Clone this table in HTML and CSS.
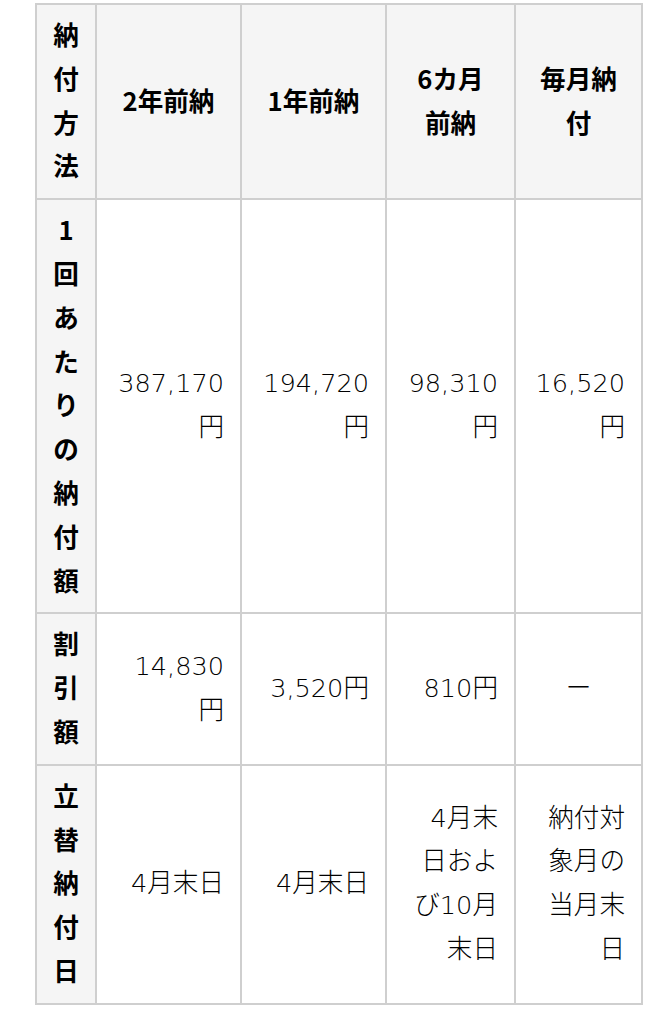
FILE: index.html
```html
<!DOCTYPE html>
<html lang="ja">
<head>
<meta charset="utf-8">
<title>納付方法</title>
<link rel="stylesheet" href="styles.css">
</head>
<body>
<table class="pay-table">
  <thead>
    <tr>
      <th class="c1">納付方法</th>
      <th class="c2">2年前納</th>
      <th class="c3">1年前納</th>
      <th class="c4">6カ月<br>前納</th>
      <th class="c5">毎月納<br>付</th>
    </tr>
  </thead>
  <tbody>
    <tr>
      <th class="row-head">1回あたりの納付額</th>
      <td>387,170<br>円</td>
      <td>194,720<br>円</td>
      <td>98,310<br>円</td>
      <td>16,520<br>円</td>
    </tr>
    <tr>
      <th class="row-head">割引額</th>
      <td>14,830<br>円</td>
      <td>3,520円</td>
      <td>810円</td>
      <td class="center">ー</td>
    </tr>
    <tr>
      <th class="row-head">立替納付日</th>
      <td>4月末日</td>
      <td>4月末日</td>
      <td>4月末<br>日およ<br>び10月<br>末日</td>
      <td>納付対<br>象月の<br>当月末<br>日</td>
    </tr>
  </tbody>
</table>
</body>
</html>
```

FILE: styles.css
```css
* {
  box-sizing: border-box;
}

html, body {
  margin: 0;
  padding: 0;
  background: #ffffff;
}

body {
  padding: 3px 0 0 35px;
  color: #000000;
  font-family: "Noto Sans CJK JP", sans-serif;
}

.pay-table {
  width: 608px;
  table-layout: fixed;
  border-collapse: separate;
  border-spacing: 0;
  border-top: 2px solid #cfcfcf;
  border-left: 2px solid #cfcfcf;
  font-size: 25.6px;
  line-height: 43.8px;
}

.pay-table th,
.pay-table td {
  border-right: 2px solid #cfcfcf;
  border-bottom: 2px solid #cfcfcf;
  padding: 9px 16px;
  vertical-align: middle;
}

.pay-table th {
  background: #f5f5f5;
  font-family: "Noto Sans CJK JP", sans-serif;
  font-weight: 700;
  text-align: center;
  padding-bottom: 11px;
  padding-top: 7px;
}

.pay-table td {
  background: #ffffff;
  font-family: "DejaVu Sans", "Noto Sans CJK JP", sans-serif;
  font-weight: 300;
  text-align: right;
}

.pay-table td.center {
  text-align: center;
}

.c1 { width: 60px; }
.c2 { width: 145px; }
.c3 { width: 145px; }
.c4 { width: 129px; }
.c5 { width: 127px; }
```
